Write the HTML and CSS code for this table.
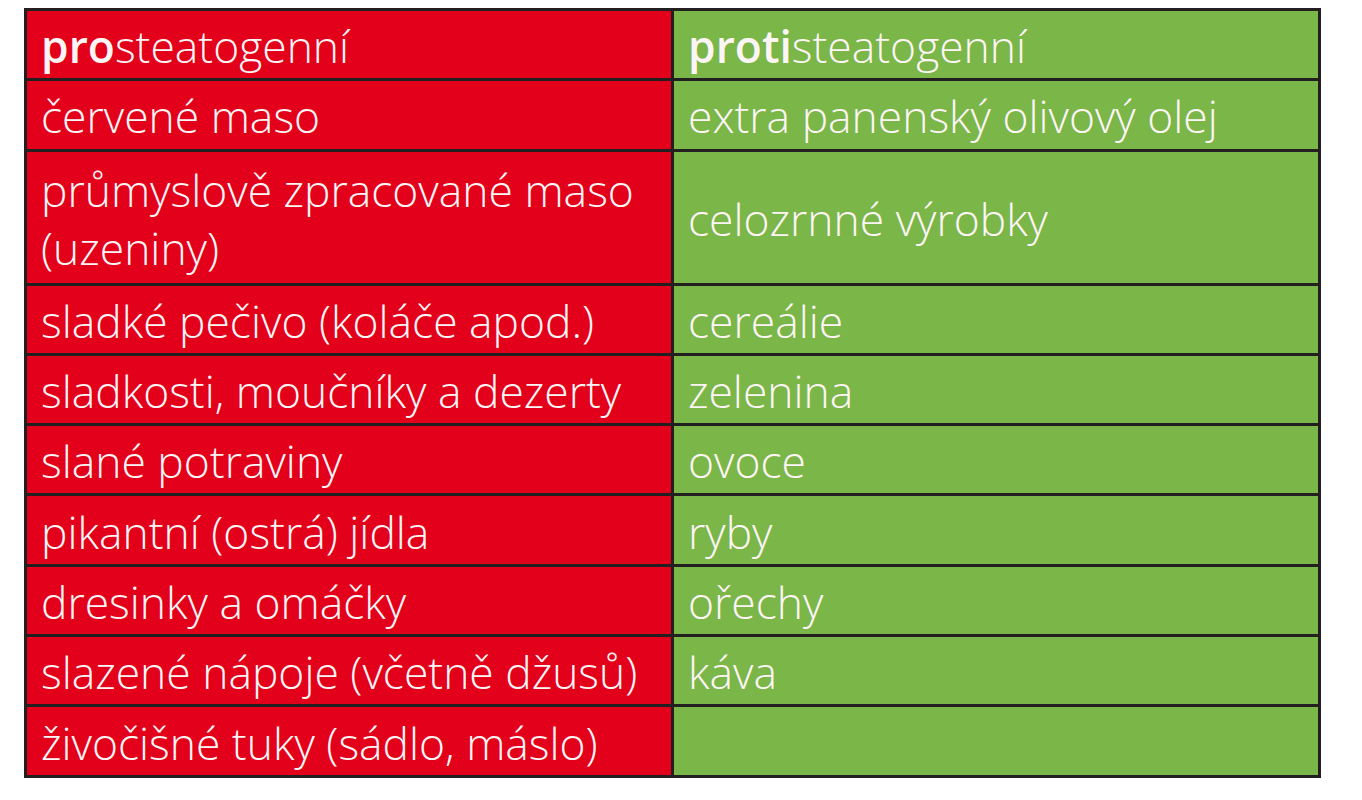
FILE: index.html
```html
<!DOCTYPE html>
<html lang="cs">
<head>
<meta charset="utf-8">
<title>Potraviny</title>
<link rel="stylesheet" href="styles.css">
</head>
<body>
<table class="food-table">
  <colgroup><col class="col-pro"><col class="col-proti"></colgroup>
  <tbody>
    <tr class="row">
      <td class="cell cell-pro"><b>pro</b>steatogenní</td>
      <td class="cell cell-proti"><b>proti</b>steatogenní</td>
    </tr>
    <tr class="row">
      <td class="cell cell-pro">červené maso</td>
      <td class="cell cell-proti">extra panenský olivový olej</td>
    </tr>
    <tr class="row row-tall">
      <td class="cell cell-pro">průmyslově zpracované maso<br>(uzeniny)</td>
      <td class="cell cell-proti">celozrnné výrobky</td>
    </tr>
    <tr class="row">
      <td class="cell cell-pro">sladké pečivo (koláče apod.)</td>
      <td class="cell cell-proti">cereálie</td>
    </tr>
    <tr class="row">
      <td class="cell cell-pro">sladkosti, moučníky a dezerty</td>
      <td class="cell cell-proti">zelenina</td>
    </tr>
    <tr class="row">
      <td class="cell cell-pro">slané potraviny</td>
      <td class="cell cell-proti">ovoce</td>
    </tr>
    <tr class="row">
      <td class="cell cell-pro">pikantní (ostrá) jídla</td>
      <td class="cell cell-proti">ryby</td>
    </tr>
    <tr class="row">
      <td class="cell cell-pro">dresinky a omáčky</td>
      <td class="cell cell-proti">ořechy</td>
    </tr>
    <tr class="row">
      <td class="cell cell-pro">slazené nápoje (včetně džusů)</td>
      <td class="cell cell-proti">káva</td>
    </tr>
    <tr class="row">
      <td class="cell cell-pro">živočišné tuky (sádlo, máslo)</td>
      <td class="cell cell-proti"></td>
    </tr>
  </tbody>
</table>
</body>
</html>
```
FILE: styles.css
```css
html, body {
  margin: 0;
  padding: 0;
  background: #ffffff;
}

body {
  padding: 8px 0 0 24px;
  font-family: "Open Sans", "Noto Sans", sans-serif;
}

.food-table {
  border-collapse: collapse;
  table-layout: fixed;
  width: 1294px;
  border: 3px solid #231f20;
}

.col-pro { width: 647px; }
.col-proti { width: 647px; }

.cell {
  border: 3px solid #231f20;
  padding: 3px 10px 0 14px;
  height: 64.3px;
  font-size: 44.4px;
  font-weight: 360;
  line-height: 58px;
  color: #fdf5f5;
  vertical-align: middle;
  white-space: nowrap;
}

.row-tall .cell {
  height: 128px;
}

.cell b {
  font-weight: 620;
}

.cell-pro {
  background: #e2001a;
}

.cell-proti {
  background: #7ab648;
}
```
